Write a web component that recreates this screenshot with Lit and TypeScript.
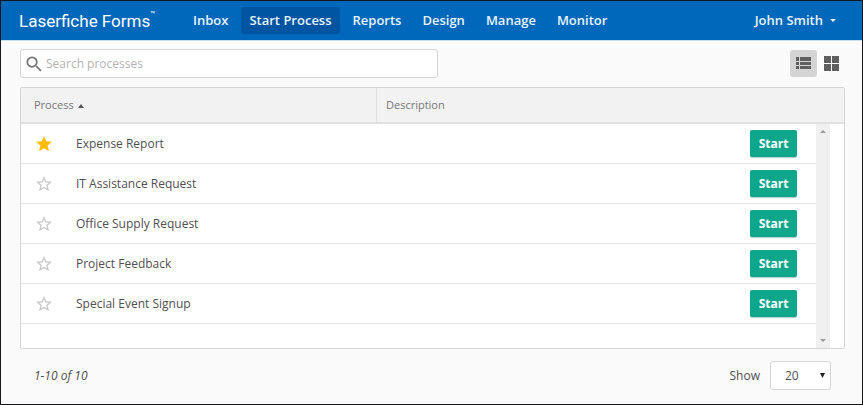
import { LitElement, html, css, svg } from "lit";
import { customElement, state } from "lit/decorators.js";
import { classMap } from "lit/directives/class-map.js";

interface Process {
  name: string;
  description: string;
  favorite: boolean;
}

const STAR_FULL =
  "M12 17.27L18.18 21l-1.64-7.03L22 9.24l-7.19-.61L12 2 9.19 8.63 2 9.24l5.46 4.73L5.82 21z";
const STAR_OUTLINE =
  "M22 9.24l-7.19-.62L12 2 9.19 8.63 2 9.24l5.46 4.73L5.82 21 12 17.27 18.18 21l-1.63-7.03L22 9.24zM12 15.4l-3.76 2.27 1-4.28-3.32-2.88 4.38-.38L12 6.1l1.71 4.04 4.38.38-3.32 2.88 1 4.28L12 15.4z";

@customElement("app-header")
export class AppHeader extends LitElement {
  static styles = css`
    :host {
      display: block;
    }
    .bar {
      display: flex;
      align-items: center;
      height: 39px;
      padding: 0 18px;
      background: #0068bb;
      border-bottom: 1px solid #c9e0f0;
      color: #fff;
    }
    .logo {
      display: flex;
      align-items: flex-start;
      width: 166px;
      color: #fff;
      text-decoration: none;
      font: 400 17px/20px "Roboto", sans-serif;
    }
    .tm {
      font-size: 8px;
      line-height: 8px;
    }
    nav {
      display: flex;
      flex: 1;
      gap: 5px;
    }
    .item {
      padding: 0 8px;
      border-radius: 3px;
      color: #e9f2fa;
      font-weight: 600;
      font-size: 13px;
      line-height: 27px;
      text-decoration: none;
    }
    .item.current {
      background: #0055a2;
    }
    .user {
      display: flex;
      align-items: center;
      gap: 7px;
      padding: 0 8px;
      border: 0;
      background: none;
      color: #e9f2fa;
      font: 600 13px/27px "Open Sans", sans-serif;
    }
  `;

  render() {
    const items = ["Inbox", "Start Process", "Reports", "Design", "Manage", "Monitor"];
    return html`
      <header class="bar">
        <a class="logo" href="#">Laserfiche Forms<span class="tm">™</span></a>
        <nav>
          ${items.map(
            (t) => html`<a class=${classMap({ item: true, current: t === "Start Process" })} href="#">${t}</a>`
          )}
        </nav>
        <button class="user" type="button">
          John Smith
          <svg width="6" height="3" viewBox="0 0 6 3"><path d="M0 0h6L3 3z" fill="currentColor" /></svg>
        </button>
      </header>
    `;
  }
}

@customElement("process-table")
export class ProcessTable extends LitElement {
  @state() private rows: Process[] = [
    { name: "Expense Report", description: "", favorite: true },
    { name: "IT Assistance Request", description: "", favorite: false },
    { name: "Office Supply Request", description: "", favorite: false },
    { name: "Project Feedback", description: "", favorite: false },
    { name: "Special Event Signup", description: "", favorite: false },
  ];

  static styles = css`
    :host {
      display: block;
    }
    .panel {
      display: flex;
      border: 1px solid #d5d5d5;
      border-radius: 2px;
      background: #fff;
    }
    table {
      flex: 1;
      min-width: 0;
      table-layout: fixed;
      border-collapse: separate;
      border-spacing: 0;
      margin-bottom: 24px;
    }
    .fav-col {
      width: 48px;
    }
    .name-col {
      width: 308px;
    }
    .action-col {
      width: 80px;
    }
    th {
      box-sizing: border-box;
      height: 36px;
      padding: 0 9px;
      background: #f2f2f2;
      border-bottom: 2px solid #e0e0e0;
      color: #777;
      font-weight: 400;
      font-size: 11px;
      text-align: left;
    }
    .process {
      padding-left: 13px;
      border-right: 1px solid #dedede;
    }
    .sort {
      padding: 0;
      border: 0;
      background: none;
      color: inherit;
      font: inherit;
    }
    .sort svg {
      margin-left: 4px;
      vertical-align: 1px;
      color: #555;
    }
    td {
      box-sizing: border-box;
      height: 40px;
      padding: 0;
      border-bottom: 1px solid #e4e4e4;
    }
    .name {
      padding-left: 7px;
    }
    .star {
      display: block;
      margin-left: 15px;
      padding: 0;
      border: 0;
      background: none;
    }
    .star svg {
      display: block;
      fill: #c8c8c8;
    }
    .star.on svg {
      fill: #fdbc0a;
    }
    .start {
      display: block;
      width: 47px;
      height: 27px;
      margin-left: 14px;
      padding: 0;
      border: 0;
      border-radius: 2px;
      background: #0ea78b;
      box-shadow: 0 1px 1px #b5c9c5;
      color: #fff;
      font: 700 12px/26px "Open Sans", sans-serif;
    }
    .side {
      display: flex;
      flex-direction: column;
      width: 28px;
    }
    .cap {
      box-sizing: border-box;
      height: 36px;
      background: #f2f2f2;
      border-bottom: 2px solid #e0e0e0;
    }
    .rail {
      display: flex;
      flex: 1;
      flex-direction: column;
      align-items: center;
      justify-content: space-between;
      box-sizing: border-box;
      width: 14px;
      padding: 6px 0;
      background: #f0f0f0;
      color: #9a9a9a;
    }
  `;

  private toggle(i: number) {
    this.rows = this.rows.map((r, n) => (n === i ? { ...r, favorite: !r.favorite } : r));
  }

  render() {
    return html`
      <div class="panel">
        <table>
          <colgroup>
            <col class="fav-col" />
            <col class="name-col" />
            <col />
            <col class="action-col" />
          </colgroup>
          <thead>
            <tr>
              <th class="process" colspan="2" aria-sort="ascending">
                <button class="sort" type="button">Process<svg width="6" height="4" viewBox="0 0 6 4"><path d="M0 4h6L3 0z" fill="currentColor" /></svg></button>
              </th>
              <th colspan="2">Description</th>
            </tr>
          </thead>
          <tbody>
            ${this.rows.map(
              (r, i) => html`
                <tr>
                  <td>
                    <button
                      class=${classMap({ star: true, on: r.favorite })}
                      type="button"
                      aria-label="Favorite ${r.name}"
                      aria-pressed=${r.favorite}
                      @click=${() => this.toggle(i)}
                    >
                      <svg width="16" height="16" viewBox="2 2 20 20">
                        <path d=${r.favorite ? STAR_FULL : STAR_OUTLINE} />
                      </svg>
                    </button>
                  </td>
                  <td class="name">${r.name}</td>
                  <td>${r.description}</td>
                  <td><button class="start" type="button">Start</button></td>
                </tr>
              `
            )}
          </tbody>
        </table>
        <div class="side">
          <div class="cap"></div>
          <div class="rail">
            <svg width="6" height="3" viewBox="0 0 6 3"><path d="M0 3h6L3 0z" fill="currentColor" /></svg>
            <svg width="6" height="3" viewBox="0 0 6 3"><path d="M0 0h6L3 3z" fill="currentColor" /></svg>
          </div>
        </div>
      </div>
    `;
  }
}

@customElement("app-root")
export class AppRoot extends LitElement {
  @state() private view: "list" | "grid" = "list";

  static styles = css`
    :host {
      display: block;
      box-sizing: border-box;
      min-height: 100vh;
      border: 1px solid #17171b;
      background: #fafafa;
      color: #4f4f4f;
      font: 12px/16px "Open Sans", sans-serif;
    }
    main {
      padding: 8px 17px 0 19px;
    }
    .tools {
      display: flex;
      align-items: center;
      justify-content: space-between;
      margin-bottom: 9px;
    }
    .search {
      display: flex;
      align-items: center;
      gap: 4px;
      box-sizing: border-box;
      width: 51%;
      max-width: 418px;
      height: 29px;
      padding: 0 5px;
      border: 1px solid #d5d5d5;
      border-radius: 3px;
      background: #fff;
    }
    .search svg {
      fill: #777;
    }
    .search input {
      flex: 1;
      min-width: 0;
      padding: 0;
      border: 0;
      outline: 0;
      background: none;
      color: #4f4f4f;
      font: inherit;
    }
    .search input::placeholder {
      color: #b3b3b3;
    }
    .views {
      display: flex;
      gap: 1px;
    }
    .view {
      display: flex;
      align-items: center;
      justify-content: center;
      width: 27px;
      height: 27px;
      padding: 0;
      border: 0;
      border-radius: 3px;
      background: none;
      color: #5f5f5f;
    }
    .view.on {
      background: #d4d4d4;
    }
    .foot {
      display: flex;
      align-items: center;
      justify-content: space-between;
      padding: 12px 14px;
    }
    .count {
      font-style: italic;
    }
    .show {
      display: flex;
      align-items: center;
      gap: 10px;
    }
    .picker {
      display: grid;
      align-items: center;
    }
    .picker select {
      grid-area: 1 / 1;
      appearance: none;
      width: 61px;
      height: 29px;
      padding: 0 14px;
      border: 1px solid #d5d5d5;
      border-radius: 3px;
      background: #fff;
      color: #4f4f4f;
      font: inherit;
    }
    .picker svg {
      grid-area: 1 / 1;
      justify-self: end;
      margin-right: 6px;
      pointer-events: none;
    }
  `;

  private viewButton(kind: "list" | "grid", label: string, icon: unknown) {
    return html`
      <button
        class=${classMap({ view: true, on: this.view === kind })}
        type="button"
        aria-label=${label}
        @click=${() => (this.view = kind)}
      >
        <svg width="15" height="15" viewBox="0 0 15 15" fill="currentColor">${icon}</svg>
      </button>
    `;
  }

  render() {
    return html`
      <app-header></app-header>
      <main>
        <div class="tools">
          <label class="search">
            <svg width="16" height="16" viewBox="2.5 2.5 18.5 18.5">
              <path
                d="M15.5 14h-.79l-.28-.27A6.47 6.47 0 0 0 16 9.5 6.5 6.5 0 1 0 9.5 16c1.61 0 3.09-.59 4.23-1.57l.27.28v.79l5 4.99L20.49 19l-4.99-5zm-6 0C7.01 14 5 11.99 5 9.5S7.01 5 9.5 5 14 7.01 14 9.5 11.99 14 9.5 14z"
              />
            </svg>
            <input type="text" placeholder="Search processes" aria-label="Search processes" />
          </label>
          <div class="views">
            ${this.viewButton(
              "list",
              "List view",
              svg`<path d="M0 1h3v4H0zM4 1h11v4H4zM0 6h3v3H0zM4 6h11v3H4zM0 10h3v3H0zM4 10h11v3H4z" />`
            )}
            ${this.viewButton(
              "grid",
              "Grid view",
              svg`<path d="M0 0h7v7H0zM8 0h7v7H8zM0 8h7v7H0zM8 8h7v7H8z" />`
            )}
          </div>
        </div>
        <process-table></process-table>
        <div class="foot">
          <span class="count">1-10 of 10</span>
          <div class="show">
            <label for="size">Show</label>
            <div class="picker">
              <select id="size">
                <option>20</option>
                <option>50</option>
                <option>100</option>
              </select>
              <svg width="5" height="5" viewBox="0 0 5 5"><path d="M0 0h5L2.5 5z" fill="#222" /></svg>
            </div>
          </div>
        </div>
      </main>
    `;
  }
}
